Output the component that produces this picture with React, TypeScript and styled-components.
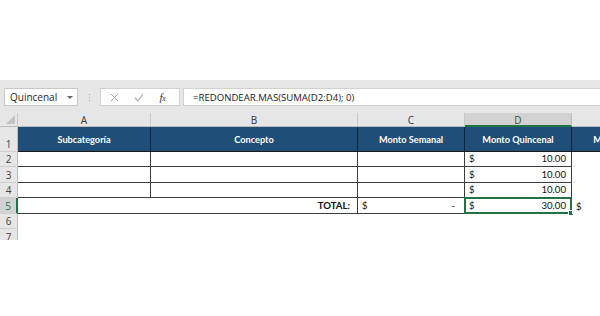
import React from "react";
import styled, { createGlobalStyle, css } from "styled-components";

const Global = createGlobalStyle`
  html, body { margin: 0; padding: 0; background: #ffffff; }
  body { width: 600px; height: 316px; overflow: hidden; font-family: "Lato", "Open Sans", sans-serif; }
`;

const Page = styled.div`
  width: 600px;
  height: 316px;
  display: flex;
  flex-direction: column;
  background: #fff;
  overflow: hidden;
`;

const TopSpace = styled.div`
  height: 80px;
  flex: none;
  background: #ffffff;
`;

const FormulaBar = styled.div`
  height: 33px;
  flex: none;
  background: #e6e6e6;
  display: flex;
  align-items: flex-start;
  padding: 8px 0 0 4px;
  box-sizing: border-box;
`;

const NameBox = styled.div`
  width: 74px;
  height: 18px;
  box-sizing: border-box;
  background: #fff;
  border: 1px solid #c8c8c8;
  display: flex;
  align-items: center;
  justify-content: space-between;
  padding: 0 4px 0 5px;
  font-family: "Open Sans", sans-serif;
  font-size: 10px;
  color: #262626;
`;

const Caret = styled.span`
  width: 0;
  height: 0;
  border-left: 3px solid transparent;
  border-right: 3px solid transparent;
  border-top: 3px solid #666;
`;

const Dots = styled.div`
  width: 22px;
  height: 18px;
  display: flex;
  flex-direction: column;
  align-items: center;
  justify-content: center;
  gap: 2px;
  span {
    width: 1px;
    height: 1px;
    background: #a8a8a8;
  }
`;

const FxBox = styled.div`
  width: 80px;
  height: 18px;
  box-sizing: border-box;
  background: #fff;
  border: 1px solid #d0d0d0;
  display: flex;
  align-items: center;
  padding: 0 0 0 9px;
`;

const IconSlot = styled.div<{ $w: number }>`
  width: ${(p) => p.$w}px;
  height: 16px;
  display: flex;
  align-items: center;
  justify-content: flex-start;
`;

const Fx = styled.span`
  font-family: "Liberation Serif", serif;
  font-style: italic;
  font-size: 11px;
  color: #333;
  letter-spacing: -0.5px;
  span { font-size: 8px; }
`;

const FormulaInput = styled.div`
  flex: 1;
  margin-left: 3px;
  height: 18px;
  box-sizing: border-box;
  background: #fff;
  border: 1px solid #d0d0d0;
  border-right: none;
  display: flex;
  align-items: center;
  padding-left: 9px;
  font-family: "Open Sans", sans-serif;
  font-size: 9.6px;
  color: #1a1a1a;
`;

const Sheet = styled.div`
  width: 600px;
  height: 127px;
  overflow: hidden;
  flex: none;
`;

const Grid = styled.div`
  display: grid;
  width: 679px;
  grid-template-columns: 18px 133px 207px 107px 107px 107px;
  grid-template-rows: 14px 25px 15px 16px 15px 16px 15px 16px;
`;

const ColHead = styled.div<{ $sel?: boolean }>`
  box-sizing: border-box;
  background: ${(p) => (p.$sel ? "#d2d2d2" : "#e6e6e6")};
  border-right: 1px solid ${(p) => (p.$sel ? "#bdbdbd" : "#c9c9c9")};
  border-bottom: ${(p) => (p.$sel ? "2px solid #217346" : "1px solid #bdbdbd")};
  display: flex;
  align-items: center;
  justify-content: center;
  font-family: "Open Sans", sans-serif;
  font-size: 10px;
  color: ${(p) => (p.$sel ? "#1f5e3a" : "#333")};
  padding-top: 1px;
`;

const Corner = styled.div`
  box-sizing: border-box;
  background: #e6e6e6;
  border-right: 1px solid #c9c9c9;
  border-bottom: 1px solid #bdbdbd;
  position: relative;
  &::after {
    content: "";
    position: absolute;
    right: 2px;
    bottom: 2px;
    width: 0;
    height: 0;
    border-left: 9px solid transparent;
    border-bottom: 9px solid #c3c3c3;
  }
`;

const RowHead = styled.div<{ $sel?: boolean }>`
  box-sizing: border-box;
  background: ${(p) => (p.$sel ? "#d2d2d2" : "#e6e6e6")};
  border-right: ${(p) => (p.$sel ? "2px solid #217346" : "1px solid #bdbdbd")};
  border-bottom: 1px solid #d0d0d0;
  display: flex;
  align-items: flex-end;
  justify-content: center;
  padding-bottom: 1px;
  overflow: hidden;
  font-family: "Open Sans", sans-serif;
  font-size: 10px;
  line-height: 12px;
  color: ${(p) => (p.$sel ? "#217346" : "#444")};
`;

const HeadCell = styled.div<{ $noRight?: boolean }>`
  box-sizing: border-box;
  background: #1f4e78;
  border-right: ${(p) => (p.$noRight ? "none" : "1px solid #12263a")};
  border-bottom: 1px solid #1a1a1a;
  display: flex;
  align-items: center;
  justify-content: center;
  padding-top: 1px;
  font-family: "Lato", sans-serif;
  font-weight: 700;
  font-size: 9.2px;
  color: #ffffff;
  white-space: nowrap;
  overflow: hidden;
`;

const Cell = styled.div<{ $bordered?: boolean; $span?: number; $align?: "left" | "right" | "split" }>`
  box-sizing: border-box;
  position: relative;
  background: #fff;
  ${(p) =>
    p.$bordered &&
    css`
      border-right: 1px solid #3c3c3c;
      border-bottom: 1px solid #3c3c3c;
    `}
  ${(p) => p.$span && css`grid-column: span ${p.$span};`}
  display: flex;
  align-items: flex-end;
  justify-content: ${(p) =>
    p.$align === "right" ? "flex-end" : p.$align === "split" ? "space-between" : "flex-start"};
  padding: 0 5px 1px 4px;
  font-family: "Lato", sans-serif;
  font-size: 9.6px;
  line-height: 12px;
  color: #111;
  white-space: nowrap;
`;

const BoldText = styled.span`
  font-weight: 700;
  padding-right: 2px;
`;

const DashText = styled.span`
  padding-right: 4px;
`;

const Selection = styled.div`
  position: absolute;
  left: -1px;
  top: -1px;
  right: -1px;
  bottom: -1px;
  border: 2px solid #217346;
  pointer-events: none;
`;

const Handle = styled.div`
  position: absolute;
  right: -3px;
  bottom: -3px;
  width: 6px;
  height: 6px;
  background: #217346;
  border: 1px solid #fff;
  box-sizing: border-box;
`;

const Empty = styled.div`
  background: #fff;
`;

const XIcon = () => (
  <svg width="9" height="9" viewBox="0 0 9 9">
    <path d="M1 1 L8 8 M8 1 L1 8" stroke="#a8a8a8" strokeWidth="1" fill="none" />
  </svg>
);

const CheckIcon = () => (
  <svg width="10" height="9" viewBox="0 0 10 9">
    <path d="M1 5 L4 8 L9 1" stroke="#a8a8a8" strokeWidth="1.1" fill="none" />
  </svg>
);

const Money = ({ v }: { v: string }) => (
  <>
    <span>$</span>
    <span>{v}</span>
  </>
);

export default function App() {
  const rows = [2, 3, 4];
  return (
    <Page>
      <Global />
      <TopSpace />
      <FormulaBar>
        <NameBox>
          <span>Quincenal</span>
          <Caret />
        </NameBox>
        <Dots>
          <span />
          <span />
          <span />
        </Dots>
        <FxBox>
          <IconSlot $w={25}>
            <XIcon />
          </IconSlot>
          <IconSlot $w={26}>
            <CheckIcon />
          </IconSlot>
          <IconSlot $w={20}>
            <Fx>
              f<span>x</span>
            </Fx>
          </IconSlot>
        </FxBox>
        <FormulaInput>=REDONDEAR.MAS(SUMA(D2:D4); 0)</FormulaInput>
      </FormulaBar>
      <Sheet>
        <Grid>
          <Corner />
          <ColHead>A</ColHead>
          <ColHead>B</ColHead>
          <ColHead>C</ColHead>
          <ColHead $sel>D</ColHead>
          <ColHead>E</ColHead>

          <RowHead>1</RowHead>
          <HeadCell>Subcategoría</HeadCell>
          <HeadCell>Concepto</HeadCell>
          <HeadCell>Monto Semanal</HeadCell>
          <HeadCell>Monto Quincenal</HeadCell>
          <HeadCell $noRight>Monto Mensual</HeadCell>

          {rows.map((r) => (
            <React.Fragment key={r}>
              <RowHead>{r}</RowHead>
              <Cell $bordered />
              <Cell $bordered />
              <Cell $bordered />
              <Cell $bordered $align="split">
                <Money v="10.00" />
              </Cell>
              <Empty />
            </React.Fragment>
          ))}

          <RowHead $sel>5</RowHead>
          <Cell $bordered $span={2} $align="right">
            <BoldText>TOTAL:</BoldText>
          </Cell>
          <Cell $bordered $align="split">
            <span>$</span>
            <DashText>-</DashText>
          </Cell>
          <Cell $bordered $align="split">
            <Money v="30.00" />
            <Selection />
            <Handle />
          </Cell>
          <Cell>
            <span>$</span>
          </Cell>

          <RowHead>6</RowHead>
          <Empty />
          <Empty />
          <Empty />
          <Empty />
          <Empty />

          <RowHead>7</RowHead>
          <Empty />
          <Empty />
          <Empty />
          <Empty />
          <Empty />
        </Grid>
      </Sheet>
    </Page>
  );
}
